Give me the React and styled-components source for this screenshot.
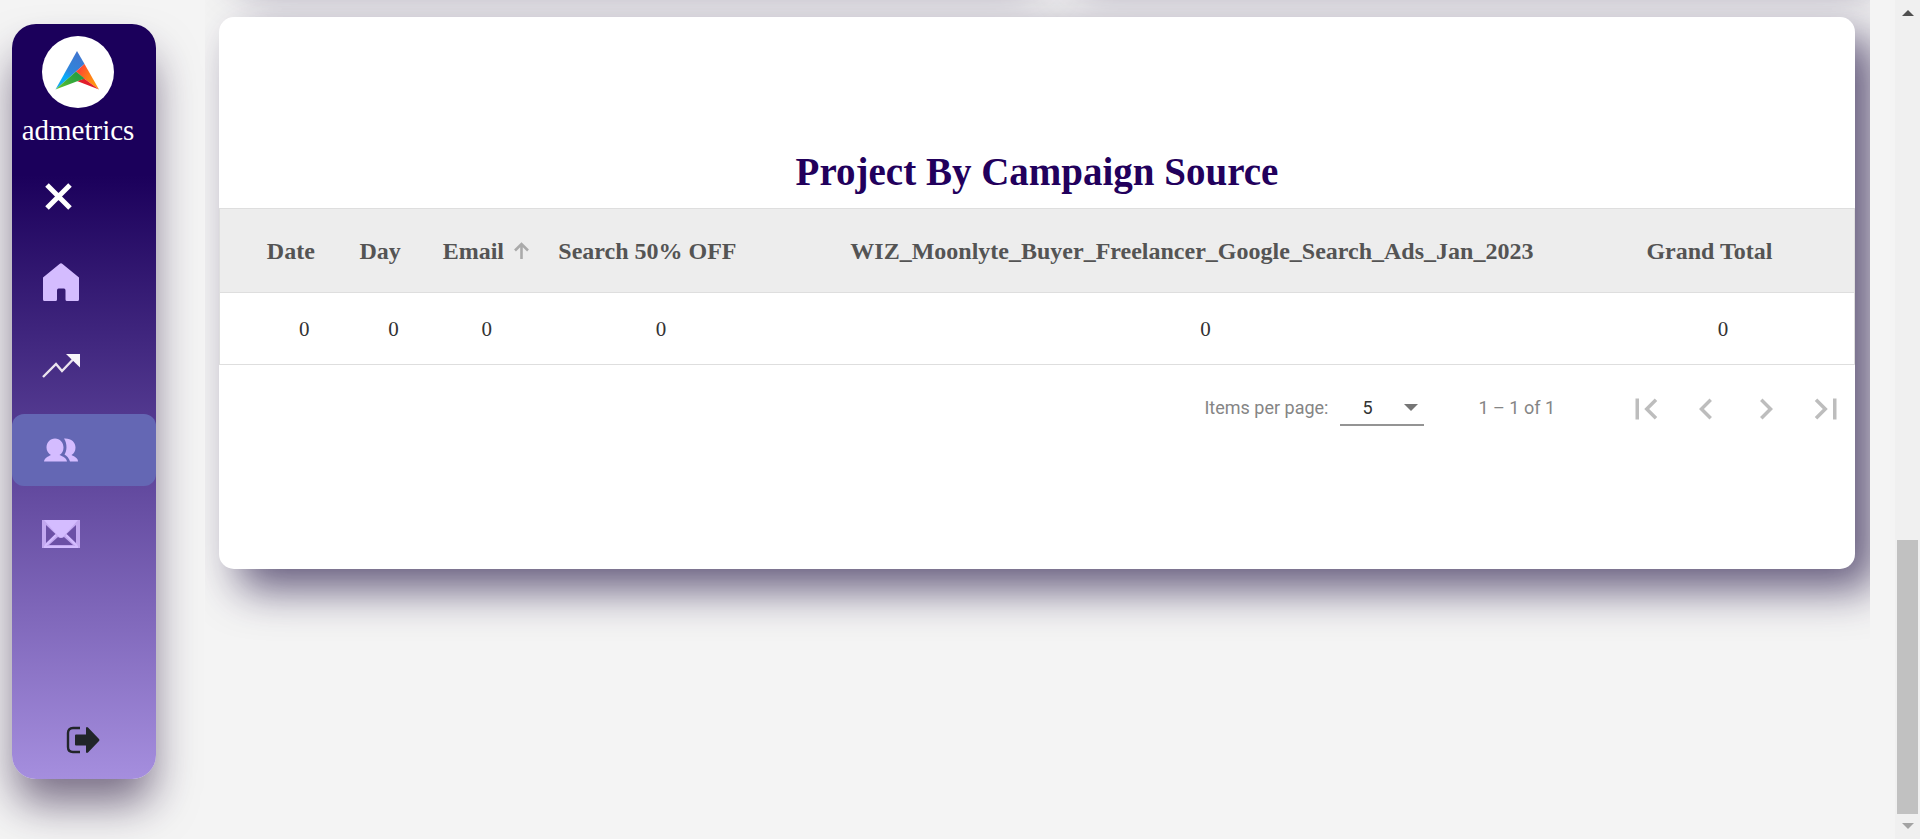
import React from "react";
import styled, { createGlobalStyle } from "styled-components";

const serif = `"Liberation Serif", "Times New Roman", Times, serif`;
const sans = `Roboto, "Liberation Sans", sans-serif`;

const GlobalStyle = createGlobalStyle`
  *, *::before, *::after { box-sizing: border-box; }
  body { margin: 0; background: #f4f4f4; font-family: ${serif}; overflow: hidden; }
  button { font: inherit; }
`;

const Page = styled.div`
  display: flex;
  height: 100vh;
  overflow: hidden;
`;

const Sidebar = styled.aside`
  flex: none;
  display: flex;
  flex-direction: column;
  width: 144px;
  height: 90vh;
  margin: 24px 49px 0 12px;
  padding-top: 12px;
  border-radius: 24px;
  background: linear-gradient(#1b005b 20%, #a58ede);
  box-shadow: 0 28px 44px -4px rgba(38, 20, 60, 0.6);
`;

const Brand = styled.a`
  display: flex;
  flex-direction: column;
  align-items: center;
  gap: 4px;
  width: 132px;
  color: #fff;
  font-size: 29px;
  line-height: 36px;
  text-decoration: none;
`;

const LogoDisc = styled.span`
  display: flex;
  width: 72px;
  height: 72px;
  border-radius: 50%;
  background: #fff;
`;

const Menu = styled.nav`
  display: flex;
  flex-direction: column;
  gap: 12px;
  margin-top: 14px;
`;

const menuItem = `
  display: flex;
  align-items: center;
  height: 72px;
  padding: 0 0 0 30px;
  border: 0;
  border-radius: 12px;
  cursor: pointer;
`;

const CloseButton = styled.button`
  ${menuItem}
  background: none;
`;

const MenuLink = styled.a`
  ${menuItem}
  background: ${(p) => (p.$active ? "#6467b4" : "none")};
`;

const Logout = styled.button`
  display: flex;
  align-self: center;
  margin: auto 0 25px;
  padding: 0 2px 0 0;
  border: 0;
  background: none;
  cursor: pointer;
`;

const Main = styled.main`
  flex: 1;
  display: flex;
  flex-direction: column;
  min-width: 0;
  margin-right: 25px;
  padding: 0 15px 0 14px;
  overflow: hidden;
`;

const panel = `
  border-radius: 15px;
  background: #fff;
  box-shadow: 20px 20px 44px rgba(38, 24, 72, 0.7);
`;

const PreviousRow = styled.div`
  flex: none;
  display: flex;
  gap: 36px;
  margin: -239px 0 56px;
`;

const PreviousCard = styled.section`
  flex: 1;
  height: 200px;
  ${panel}
`;

const Card = styled.section`
  flex: none;
  padding: 131px 0 118px;
  ${panel}
`;

const Title = styled.h1`
  margin: 0 0 12px;
  color: #22005c;
  font-size: 39px;
  line-height: 48px;
  text-align: center;
`;

const Table = styled.table`
  width: 100%;
  border: 1px solid #dedede;
  border-collapse: collapse;
  table-layout: fixed;
`;

const Col = styled.col`
  width: ${(p) => p.$width};
`;

const HeadRow = styled.tr`
  height: 84px;
  background: #ededed;
  border-bottom: 1px solid #dedede;
`;

const BodyRow = styled.tr`
  height: 72px;
`;

const edges = `
  padding: 0;
  &:first-child { padding-left: 40px; }
  &:last-child { padding-right: 32px; }
`;

const HeadCell = styled.th`
  ${edges}
  color: #545454;
  font-size: 24px;
  line-height: 28px;
  white-space: nowrap;
`;

const SortButton = styled.button`
  display: flex;
  align-items: center;
  justify-content: center;
  gap: 10px;
  width: 100%;
  padding: 0;
  border: 0;
  background: none;
  color: inherit;
  font-weight: 700;
  cursor: pointer;
`;

const SortSlot = styled.span`
  display: flex;
  width: 17px;
  visibility: ${(p) => (p.$shown ? "visible" : "hidden")};
`;

const Cell = styled.td`
  ${edges}
  color: #333;
  font-size: 21px;
  line-height: 24px;
  text-align: center;
`;

const Paginator = styled.div`
  display: flex;
  align-items: center;
  justify-content: flex-end;
  height: 86px;
  color: #858585;
  font-family: ${sans};
  font-size: 18px;
  line-height: 24px;
`;

const SelectBox = styled.span`
  position: relative;
  display: flex;
  width: 84px;
  margin: 0 54px 0 12px;
`;

const Select = styled.select`
  appearance: none;
  width: 100%;
  height: 36px;
  padding: 0 0 0 22px;
  border: 0;
  border-bottom: 2px solid #949494;
  border-radius: 0;
  background: none;
  color: #333;
  font: 18px ${sans};
`;

const Caret = styled.span`
  position: absolute;
  top: 14px;
  right: 6px;
  border: 7px solid transparent;
  border-top-color: #757575;
  border-bottom: 0;
  pointer-events: none;
`;

const PageButtons = styled.div`
  display: flex;
  margin: 0 -1px 0 61px;
`;

const PageButton = styled.button`
  display: flex;
  align-items: center;
  justify-content: center;
  width: 60px;
  height: 60px;
  padding: 2px 0 0;
  border: 0;
  background: none;
  fill: #bdbdbd;
`;

const Scrollbar = styled.div`
  flex: none;
  display: flex;
  flex-direction: column;
  align-items: center;
  justify-content: space-between;
  width: 25px;
  padding: 10px 0;
  background: #f0f0f0;
`;

const ScrollArrow = styled.span`
  border: 6px solid transparent;
  ${(p) =>
    p.$up
      ? "border-top: 0; border-bottom-color: #505050;"
      : "border-bottom: 0; border-top-color: #a3a3a3;"}
`;

const Thumb = styled.span`
  width: 21px;
  height: 274px;
  margin: auto 0 9px;
  background: #c1c1c1;
`;

const Logo = () => (
  <svg width="72" height="72" viewBox="0 0 72 72" aria-hidden="true">
    <defs>
      <linearGradient id="blue" x1="0.7" y1="0" x2="0.2" y2="1">
        <stop offset="0" stopColor="#4175cf" />
        <stop offset="0.5" stopColor="#2f86dc" />
        <stop offset="0.7" stopColor="#05aefc" />
        <stop offset="1" stopColor="#1aa6f0" />
      </linearGradient>
      <linearGradient id="orange" x1="0" y1="0" x2="1" y2="0.6">
        <stop offset="0.1" stopColor="#ff3a3c" />
        <stop offset="0.6" stopColor="#ff7a17" />
        <stop offset="1" stopColor="#ff9a10" />
      </linearGradient>
      <linearGradient id="green" x1="0" y1="1" x2="1" y2="0.3">
        <stop offset="0" stopColor="#6cc62c" />
        <stop offset="0.6" stopColor="#35a93b" />
        <stop offset="1" stopColor="#259a42" />
      </linearGradient>
    </defs>
    <path d="M35 15 42.500 28 34 35.500 13.500 53.500Z" fill="url(#blue)" />
    <path d="M42.500 28 57 53.500 42 42.500 34 35.500Z" fill="url(#orange)" />
    <path d="M42 42.500 57 53.500 35 45Z" fill="#e21f2b" />
    <path d="M34 35.500 42.500 42.500 13.500 53.500Z" fill="url(#green)" />
  </svg>
);

const CloseIcon = () => (
  <svg width="32" height="32" viewBox="0 0 32 32" aria-hidden="true">
    <path d="M5 3 28 26M28 3 5 26" stroke="#fff" strokeWidth="5" />
  </svg>
);

const HomeIcon = () => (
  <svg width="38" height="38" viewBox="0 0 38 38" aria-hidden="true">
    <path
      d="M17.500 1Q19 -.5 20.500 1L37 14.500V36.500Q37 38 35.500 38H25Q23.500 38 23.500 36.500V27.500Q23.500 25.500 22 25.500H16.500Q15 25.500 15 27.500V36.500Q15 38 13.500 38H2.500Q1 38 1 36.500V14.500Z"
      fill="#d4bcff"
    />
  </svg>
);

const TrendIcon = () => (
  <svg width="38" height="24" viewBox="0 0 38 24" aria-hidden="true">
    <path d="M1 23 14 10 20 17 31 5.500" fill="none" stroke="#ebe4ee" strokeWidth="2.400" />
    <path d="M24 0H38V13.500Z" fill="#f8f5f9" />
  </svg>
);

const PeopleIcon = () => (
  <svg width="38" height="24" viewBox="0 0 38 24" aria-hidden="true">
    <path
      d="M13 .500C18 .500 21.500 4.500 21.500 9.500C21.500 13 20 15.500 17.500 17C21 18.500 24.500 20 25 23.500H2C2.500 20 6 18.500 9 17C6.500 15.500 4.500 13 4.500 9.500C4.500 4.500 8 .500 13 .500Z"
      fill="#d4bcff"
    />
    <path
      d="M22 .500C29 0 33.500 4 33.500 9.500C33.500 13 32 15.500 29.500 17C33 19 36 20 36 23.500H28C27 20 25 18 22.500 16.500C25 13 25.500 6 22 .500Z"
      fill="#d4bcff"
    />
  </svg>
);

const MailIcon = () => (
  <svg width="38" height="28" viewBox="0 0 38 28" aria-hidden="true">
    <path d="M0 0H38V28H0Z" fill="#c3a8f0" />
    <path d="M4 5 13.500 14 4 23ZM34 5V23L24.500 14ZM7 25 16 17Q19 19 22 17L31 25Z" fill="#6c50a6" />
    <path d="M2 0H36L22 16Q19 19 16 16Z" fill="#d4bcff" />
    <path d="M3 26 14 15M35 26 24 15M2 27H36" stroke="#d4bcff" strokeWidth="2" />
  </svg>
);

const LogoutIcon = () => (
  <svg width="34" height="28" viewBox="0 0 34 28" aria-hidden="true">
    <path d="M14 2H7Q2 2 2 7V21Q2 26 7 26H14" fill="none" stroke="#212529" strokeWidth="2.400" />
    <path
      d="M10 8.500H20V2Q20.500 .500 22 1.500L33 13Q34 14 33 15L22 26.500Q20.500 27.500 20 26V19.500H10Q9 19.500 9 18.500V9.500Q9 8.500 10 8.500Z"
      fill="#212529"
    />
  </svg>
);

const SortArrow = () => (
  <svg width="15" height="18" viewBox="0 0 15 18" aria-hidden="true">
    <path d="M7.500 17V2.500M1 8.500 7.500 2 14 8.500" fill="none" stroke="#aaa" strokeWidth="2.600" />
  </svg>
);

const PageIcon = ({ d }) => (
  <svg width="42" height="42" viewBox="0 0 24 24" aria-hidden="true">
    <path d={d} />
  </svg>
);

const columns = [
  { label: "Date", width: "7.9%", value: 0 },
  { label: "Day", width: "5.5%", value: 0 },
  { label: "Email", width: "5.9%", value: 0, sorted: true },
  { label: "Search 50% OFF", width: "15.4%", value: 0 },
  {
    label: "WIZ_Moonlyte_Buyer_Freelancer_Google_Search_Ads_Jan_2023",
    width: "51.2%",
    value: 0,
  },
  { label: "Grand Total", width: "14.1%", value: 0 },
];

const links = [
  { label: "Home", Icon: HomeIcon },
  { label: "Trends", Icon: TrendIcon },
  { label: "Leads", Icon: PeopleIcon, active: true },
  { label: "Mail", Icon: MailIcon },
];

const pageActions = [
  { label: "First page", d: "M18.41 16.59L13.82 12l4.59-4.59L17 6l-6 6 6 6zM6 6h2v12H6z" },
  { label: "Previous page", d: "M15.41 7.41L14 6l-6 6 6 6 1.410-1.410L10.83 12z" },
  { label: "Next page", d: "M10 6L8.590 7.410 13.170 12l-4.580 4.590L10 18l6-6z" },
  { label: "Last page", d: "M5.590 7.410L10.180 12l-4.590 4.590L7 18l6-6-6-6zM16 6h2v12h-2z" },
];

export default function App() {
  return (
    <Page>
      <GlobalStyle />
      <Sidebar>
        <Brand href="#home">
          <LogoDisc>
            <Logo />
          </LogoDisc>
          admetrics
        </Brand>
        <Menu>
          <CloseButton type="button" aria-label="Close menu">
            <CloseIcon />
          </CloseButton>
          {links.map(({ label, Icon, active }) => (
            <MenuLink key={label} href={`#${label.toLowerCase()}`} aria-label={label} $active={active}>
              <Icon />
            </MenuLink>
          ))}
        </Menu>
        <Logout type="button" aria-label="Log out">
          <LogoutIcon />
        </Logout>
      </Sidebar>
      <Main>
        <PreviousRow>
          <PreviousCard />
          <PreviousCard />
        </PreviousRow>
        <Card>
          <Title>Project By Campaign Source</Title>
          <Table>
            <colgroup>
              {columns.map((c) => (
                <Col key={c.label} $width={c.width} />
              ))}
            </colgroup>
            <thead>
              <HeadRow>
                {columns.map((c) => (
                  <HeadCell key={c.label} scope="col">
                    <SortButton type="button">
                      {c.label}
                      <SortSlot $shown={c.sorted}>
                        <SortArrow />
                      </SortSlot>
                    </SortButton>
                  </HeadCell>
                ))}
              </HeadRow>
            </thead>
            <tbody>
              <BodyRow>
                {columns.map((c) => (
                  <Cell key={c.label}>{c.value}</Cell>
                ))}
              </BodyRow>
            </tbody>
          </Table>
          <Paginator>
            <label htmlFor="page-size">Items per page:</label>
            <SelectBox>
              <Select id="page-size" defaultValue="5">
                <option>5</option>
                <option>10</option>
                <option>25</option>
              </Select>
              <Caret />
            </SelectBox>
            <span>1 – 1 of 1</span>
            <PageButtons>
              {pageActions.map((a) => (
                <PageButton key={a.label} type="button" aria-label={a.label} disabled>
                  <PageIcon d={a.d} />
                </PageButton>
              ))}
            </PageButtons>
          </Paginator>
        </Card>
      </Main>
      <Scrollbar aria-hidden="true">
        <ScrollArrow $up />
        <Thumb />
        <ScrollArrow />
      </Scrollbar>
    </Page>
  );
}
